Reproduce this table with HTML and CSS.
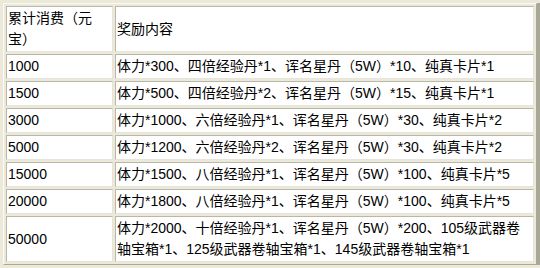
FILE: index.html
```html
<!DOCTYPE html>
<html lang="zh-CN">
<head>
<meta charset="utf-8">
<title>累计消费奖励</title>
<link rel="stylesheet" href="styles.css">
</head>
<body>
<div class="frame">
  <table class="rewards">
    <colgroup>
      <col class="col-amount">
      <col class="col-reward">
    </colgroup>
    <tr class="tall"><td>累计消费（元宝）</td><td>奖励内容</td></tr>
    <tr><td>1000</td><td>体力*300、四倍经验丹*1、诨名星丹（5W）*10、纯真卡片*1</td></tr>
    <tr><td>1500</td><td>体力*500、四倍经验丹*2、诨名星丹（5W）*15、纯真卡片*1</td></tr>
    <tr><td>3000</td><td>体力*1000、六倍经验丹*1、诨名星丹（5W）*30、纯真卡片*2</td></tr>
    <tr><td>5000</td><td>体力*1200、六倍经验丹*2、诨名星丹（5W）*30、纯真卡片*2</td></tr>
    <tr><td>15000</td><td>体力*1500、八倍经验丹*1、诨名星丹（5W）*100、纯真卡片*5</td></tr>
    <tr><td>20000</td><td>体力*1800、八倍经验丹*1、诨名星丹（5W）*100、纯真卡片*5</td></tr>
    <tr class="tall"><td>50000</td><td>体力*2000、十倍经验丹*1、诨名星丹（5W）*200、105级武器卷轴宝箱*1、125级武器卷轴宝箱*1、145级武器卷轴宝箱*1</td></tr>
  </table>
</div>
</body>
</html>
```
FILE: styles.css
```css
html, body {
  margin: 0;
  padding: 0;
  background: #ece9d8;
}
.frame {
  width: 534px;
  height: 262px;
  padding: 3px 0 0 3px;
  background: #ece9d8;
  box-shadow: 3px 3px 0 #a9a798;
}
.rewards {
  width: 534px;
  table-layout: fixed;
  border-collapse: separate;
  border-spacing: 2px;
  border: 1px solid;
  border-color: #fbfaf6 #aca899 #aca899 #fbfaf6;
  background: #ece9d8;
  font-family: "Liberation Sans", "Noto Sans CJK SC", sans-serif;
  font-size: 14px;
  color: #000;
}
.col-amount { width: 107px; }
.col-reward { width: 419px; }
.rewards td {
  background: #fff;
  border: 1px solid;
  border-color: #b9b6aa #e6e4dc #e6e4dc #b9b6aa;
  padding: 1px 1px;
  line-height: 21px;
  height: 21px;
  vertical-align: middle;
  text-align: left;
}
.rewards tr.tall td {
  height: 42px;
}
```
